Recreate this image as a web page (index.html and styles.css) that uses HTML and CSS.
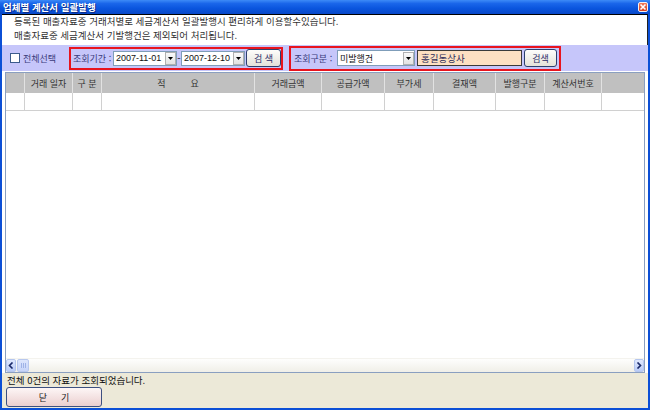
FILE: index.html
```html
<!DOCTYPE html>
<html lang="ko">
<head>
<meta charset="utf-8">
<title>업체별 계산서 일괄발행</title>
<link rel="stylesheet" href="styles.css">
</head>
<body>
<div class="window">
  <div class="titlebar">
    <span class="title">업체별 계산서 일괄발행</span>
    <span class="close-x"><svg width="8" height="8" viewBox="0 0 8 8"><path d="M1.5 1.5 L6.5 6.5 M6.5 1.5 L1.5 6.5" stroke="#fff" stroke-width="1.6"/></svg></span>
  </div>
  <div class="content">
    <div class="desc">
      <p>등록된 매출자료중 거래처별로 세금계산서 일괄발행시 편리하게 이용할수있습니다.</p>
      <p>매출자료중 세금계산서 기발행건은 제외되어 처리됩니다.</p>
    </div>
    <div class="toolbar">
      <label class="check"><span class="box"></span>전체선택</label>
      <div class="redbox period">
        <span class="lbl">조회기간 :</span>
        <span class="combo date"><span class="val">2007-11-01</span><span class="arrow"><svg width="5" height="3" viewBox="0 0 5 3"><path d="M0 0 H5 L2.5 3 Z" fill="#000"/></svg></span></span>
        <span class="dash">-</span>
        <span class="combo date"><span class="val">2007-12-10</span><span class="arrow"><svg width="5" height="3" viewBox="0 0 5 3"><path d="M0 0 H5 L2.5 3 Z" fill="#000"/></svg></span></span>
        <button class="btn btn-search1">검 색</button>
      </div>
      <div class="redbox kind">
        <span class="lbl">조회구분 :</span>
        <span class="combo kindsel"><span class="val">미발행건</span><span class="arrow"><svg width="5" height="3" viewBox="0 0 5 3"><path d="M0 0 H5 L2.5 3 Z" fill="#000"/></svg></span></span>
        <span class="input">홍길동상사</span>
        <button class="btn btn-search2">검색</button>
      </div>
    </div>
    <div class="grid">
      <div class="row head">
        <span class="cell"></span>
        <span class="cell">거래 일자</span>
        <span class="cell">구 분</span>
        <span class="cell wide"><span>적</span><span>요</span></span>
        <span class="cell">거래금액</span>
        <span class="cell">공급가액</span>
        <span class="cell">부가세</span>
        <span class="cell">결재액</span>
        <span class="cell">발행구분</span>
        <span class="cell">계산서번호</span>
        <span class="cell"></span>
      </div>
      <div class="row data">
        <span class="cell"></span><span class="cell"></span><span class="cell"></span><span class="cell"></span>
        <span class="cell"></span><span class="cell"></span><span class="cell"></span><span class="cell"></span>
        <span class="cell"></span><span class="cell"></span><span class="cell"></span>
      </div>
      <div class="empty"></div>
      <div class="hscroll">
        <span class="sbtn"><svg width="6" height="7" viewBox="0 0 6 7"><path d="M4.5 0.5 L1.5 3.5 L4.5 6.5" fill="none" stroke="#1a2a6a" stroke-width="1.6"/></svg></span>
        <span class="thumb"><i></i><i></i><i></i></span>
        <span class="track"></span>
        <span class="sbtn"><svg width="6" height="7" viewBox="0 0 6 7"><path d="M1.5 0.5 L4.5 3.5 L1.5 6.5" fill="none" stroke="#1a2a6a" stroke-width="1.6"/></svg></span>
      </div>
    </div>
    <div class="footer">
      <div class="status">전체 0건의 자료가 조회되었습니다.</div>
      <button class="close-btn"><span>닫</span><span>기</span></button>
    </div>
  </div>
</div>
</body>
</html>
```
FILE: styles.css
```css
* { box-sizing: border-box; margin: 0; padding: 0; }
html, body { width: 650px; height: 410px; overflow: hidden; }
body {
  font-family: "Noto Sans CJK KR", "Noto Sans", sans-serif;
  font-size: 9.5px;
  color: #222;
  background: #fff;
}
.window {
  width: 650px;
  height: 410px;
  background: #0b4fd6;
  padding: 0 2px 2px;
  display: flex;
  flex-direction: column;
}
.titlebar {
  height: 14px;
  margin: 0 -2px;
  padding: 0 2px 0 3px;
  display: flex;
  align-items: center;
  justify-content: space-between;
  background: linear-gradient(180deg, #3d8bf7 0%, #1a66ea 25%, #0a55de 60%, #0848c8 100%);
}
.title {
  color: #fff;
  font-weight: bold;
  font-size: 9.5px;
  line-height: 14px;
  text-shadow: 1px 1px 0 #0a2c8a;
}
.close-x {
  width: 10px;
  height: 10px;
  border: 1px solid #f4f0f0;
  border-radius: 2px;
  background: linear-gradient(180deg, #f07a5c, #d8401e);
  display: flex;
  align-items: center;
  justify-content: center;
}
.close-x svg { display: block; }
.content {
  flex: 1;
  background: #fff;
  display: flex;
  flex-direction: column;
}
.desc {
  height: 31px;
  border-top: 1px solid #000;
  border-right: 1px solid #222;
  padding: 0 0 0 12px;
  color: #333;
  line-height: 13.8px;
}
.toolbar {
  height: 26px;
  background: #c6c6fa;
  display: flex;
  align-items: center;
  padding-left: 8px;
}
.check {
  width: 59px;
  display: flex;
  align-items: center;
  gap: 3px;
  color: #3a3a7a;
  font-size: 9px;
}
.check .box {
  width: 10px;
  height: 10px;
  background: #fff;
  border: 1px solid #3b5b8c;
}
.redbox {
  border: 2px solid #e8141e;
  display: flex;
  align-items: center;
}
.period { width: 214px; height: 23px; padding-left: 2px; }
.kind { width: 272px; height: 25px; margin-left: 6px; padding-left: 3px; }
.lbl { color: #3a3a7a; white-space: nowrap; font-size: 9px; }
.period .lbl { width: 40px; }
.kind .lbl { width: 43px; }
.combo {
  height: 15px;
  background: #fff;
  border: 1px solid #7f9db9;
  display: flex;
  align-items: center;
  justify-content: space-between;
  padding-left: 2px;
  color: #111;
  font-size: 9px;
}
.date { width: 64px; }
.date .val { font-family: "Liberation Sans", Arial, sans-serif; font-size: 9px; }
.kindsel { width: 78px; height: 16px; }
.arrow {
  width: 11px;
  height: 13px;
  background: linear-gradient(180deg, #fafafa, #e2e2e2);
  border: 1px solid #b0b0b0;
  display: flex;
  align-items: center;
  justify-content: center;
}
.arrow svg { display: block; }
.dash { width: 4px; text-align: center; color: #111; }
.btn {
  height: 18px;
  border: 1px solid #2c3f6e;
  border-radius: 3px;
  background: linear-gradient(180deg, #fdfdfb, #e4e2da);
  color: #2a2a66;
  font-family: "Noto Sans CJK KR", sans-serif;
  font-size: 9px;
}
.btn-search1 { width: 35px; margin-left: 1px; }
.btn-search2 { width: 33px; margin-left: 2px; }
.input {
  width: 105px;
  height: 16px;
  margin-left: 2px;
  background: #fde0c2;
  border: 1px solid #3a3a3a;
  padding-left: 3px;
  color: #2a2a5a;
  line-height: 14px;
}
.grid {
  width: 640px;
  height: 301px;
  margin: 1px 0 0 3px;
  border: 1px solid #8a9fc0;
  display: flex;
  flex-direction: column;
  background: #fff;
}
.row {
  display: grid;
  grid-template-columns: 19px 48px 29px 153px 67px 63px 49px 62px 49px 57px 42px;
}
.cell {
  border-right: 1px solid #d0d0d0;
  display: flex;
  align-items: center;
  justify-content: center;
  color: #333;
  white-space: nowrap;
  font-size: 9px;
}
.head { height: 20px; background: #c0c0c0; }
.head .cell { border-right-color: #e2e2e2; }
.head .cell:last-child { border-right: none; }
.wide { gap: 25px; }
.data { height: 18px; border-bottom: 1px solid #d0d0d0; }
.data .cell:last-child { border-right: none; }
.empty { flex: 1; }
.hscroll {
  height: 14px;
  display: flex;
  align-items: center;
  background: linear-gradient(180deg, #fefefd, #f0efe8);
  border-top: 1px solid #f4f3ee;
}
.sbtn {
  width: 10px;
  height: 13px;
  background: linear-gradient(180deg, #dfe8fe, #b9cbf7);
  border: 1px solid #b4c6ee;
  border-radius: 2px;
  display: flex;
  align-items: center;
  justify-content: center;
}
.sbtn svg { display: block; }
.thumb {
  width: 12px;
  height: 13px;
  margin-left: 1px;
  background: linear-gradient(180deg, #dde6fd, #c6d4f8);
  border: 1px solid #b8c8ee;
  border-radius: 2px;
  display: flex;
  align-items: center;
  justify-content: center;
  gap: 1px;
}
.thumb i { display: block; width: 1px; height: 5px; background: #9fb3e6; }
.track { flex: 1; }
.footer {
  flex: 1;
  background: #ece9d8;
  padding-left: 4px;
}
.status {
  height: 14px;
  line-height: 14px;
  padding-left: 1px;
  color: #111;
}
.close-btn {
  width: 96px;
  height: 20px;
  border: 1px solid #3c5080;
  border-radius: 3px;
  background: linear-gradient(180deg, #fdf6f6, #ebcfcf);
  color: #222;
  font-family: "Noto Sans CJK KR", sans-serif;
  font-size: 9px;
  display: flex;
  align-items: center;
  justify-content: center;
  gap: 14px;
}
```
